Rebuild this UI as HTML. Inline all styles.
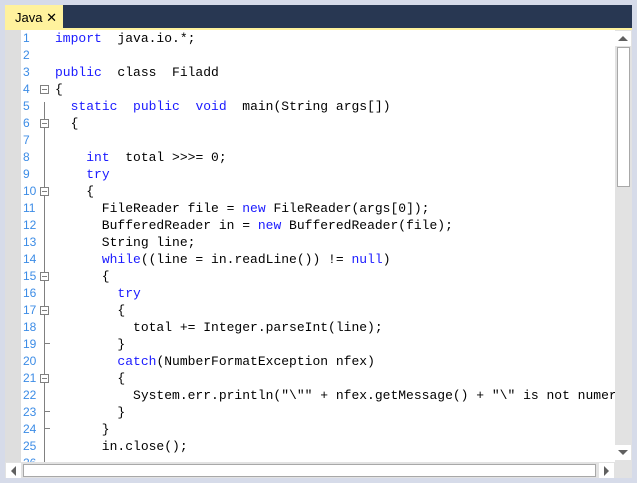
<!DOCTYPE html>
<html><head><style>
*{margin:0;padding:0;box-sizing:border-box}
body{width:637px;height:483px;background:#d6dbe9;position:relative;overflow:hidden;font-family:"Liberation Sans",sans-serif}
#tabbar{position:absolute;left:5px;top:5px;width:627px;height:23px;background:#283752}
#tab{position:absolute;left:5px;top:5px;width:58px;height:23px;background:#fff29d;font-size:13px;color:#000;padding:5px 0 0 10px}
#yl{position:absolute;left:5px;top:28px;width:627px;height:2px;background:#fff29d}
#ed{position:absolute;left:5px;top:30px;width:627px;height:432px;background:#fff;overflow:hidden}
#gut{position:absolute;left:0;top:0;width:16px;height:432px;background:#dedede}
.ln{position:absolute;left:18px;font-size:12px;color:#3c8ce6;height:17px;line-height:17px}
.cd{position:absolute;left:50px;font-family:"Liberation Mono",monospace;font-size:13px;height:17px;line-height:17px;white-space:pre;color:#000}
.k{color:#1a1aff}
.fb{position:absolute;left:35px;width:9px;height:9px;border:1px solid #808080;background:#fff}
.fb:after{content:"";position:absolute;left:1px;top:3px;width:5px;height:1px;background:#808080}
#fl{position:absolute;left:39px;top:72px;width:1px;height:360px;background:#808080}
.tk{position:absolute;left:40px;width:5px;height:1px;background:#808080}
#vs{position:absolute;left:615px;top:30px;width:17px;height:432px;background:#e2e2e2}
#hs{position:absolute;left:5px;top:462px;width:627px;height:16px;background:#e2e2e2}
</style></head><body>
<div id="tabbar"></div>
<div id="tab">Java ✕</div>
<div id="yl"></div>
<div id="ed">
<div id="gut"></div>
<div id="fl"></div>
<div class="ln" style="top:0">1</div><div class="ln" style="top:17px">2</div><div class="ln" style="top:34px">3</div><div class="ln" style="top:51px">4</div><div class="ln" style="top:68px">5</div><div class="ln" style="top:85px">6</div><div class="ln" style="top:102px">7</div><div class="ln" style="top:119px">8</div><div class="ln" style="top:136px">9</div><div class="ln" style="top:153px">10</div><div class="ln" style="top:170px">11</div><div class="ln" style="top:187px">12</div><div class="ln" style="top:204px">13</div><div class="ln" style="top:221px">14</div><div class="ln" style="top:238px">15</div><div class="ln" style="top:255px">16</div><div class="ln" style="top:272px">17</div><div class="ln" style="top:289px">18</div><div class="ln" style="top:306px">19</div><div class="ln" style="top:323px">20</div><div class="ln" style="top:340px">21</div><div class="ln" style="top:357px">22</div><div class="ln" style="top:374px">23</div><div class="ln" style="top:391px">24</div><div class="ln" style="top:408px">25</div><div class="ln" style="top:425px">26</div>
<div class="fb" style="top:55px"></div><div class="fb" style="top:89px"></div><div class="fb" style="top:157px"></div><div class="fb" style="top:242px"></div><div class="fb" style="top:276px"></div><div class="fb" style="top:344px"></div>
<div class="tk" style="top:313px"></div><div class="tk" style="top:381px"></div><div class="tk" style="top:398px"></div>
<div class="cd" style="top:0"><span class="k">import</span>  java.io.*;</div>
<div class="cd" style="top:34px"><span class="k">public</span>  class  Filadd</div>
<div class="cd" style="top:51px">{</div>
<div class="cd" style="top:68px">  <span class="k">static</span>  <span class="k">public</span>  <span class="k">void</span>  main(String args[])</div>
<div class="cd" style="top:85px">  {</div>
<div class="cd" style="top:119px">    <span class="k">int</span>  total &gt;&gt;&gt;= 0;</div>
<div class="cd" style="top:136px">    <span class="k">try</span></div>
<div class="cd" style="top:153px">    {</div>
<div class="cd" style="top:170px">      FileReader file = <span class="k">new</span> FileReader(args[0]);</div>
<div class="cd" style="top:187px">      BufferedReader in = <span class="k">new</span> BufferedReader(file);</div>
<div class="cd" style="top:204px">      String line;</div>
<div class="cd" style="top:221px">      <span class="k">while</span>((line = in.readLine()) != <span class="k">null</span>)</div>
<div class="cd" style="top:238px">      {</div>
<div class="cd" style="top:255px">        <span class="k">try</span></div>
<div class="cd" style="top:272px">        {</div>
<div class="cd" style="top:289px">          total += Integer.parseInt(line);</div>
<div class="cd" style="top:306px">        }</div>
<div class="cd" style="top:323px">        <span class="k">catch</span>(NumberFormatException nfex)</div>
<div class="cd" style="top:340px">        {</div>
<div class="cd" style="top:357px">          System.err.println("\"" + nfex.getMessage() + "\" is not numeric");</div>
<div class="cd" style="top:374px">        }</div>
<div class="cd" style="top:391px">      }</div>
<div class="cd" style="top:408px">      in.close();</div>
</div>
<div id="vs">
<div style="position:absolute;left:0;top:1px;width:16px;height:15px;background:#fff"><div style="position:absolute;left:3px;top:5px;border-left:5px solid transparent;border-right:5px solid transparent;border-bottom:5px solid #606060"></div></div>
<div style="position:absolute;left:2px;top:17px;width:13px;height:140px;background:#fff;border:1px solid #a8a8a8"></div>
<div style="position:absolute;left:0;top:415px;width:16px;height:15px;background:#fff"><div style="position:absolute;left:3px;top:5px;border-left:5px solid transparent;border-right:5px solid transparent;border-top:5px solid #606060"></div></div>
</div>
<div id="hs">
<div style="position:absolute;left:1px;top:1px;width:15px;height:15px;background:#fff"><div style="position:absolute;left:5px;top:3px;border-top:5px solid transparent;border-bottom:5px solid transparent;border-right:5px solid #606060"></div></div>
<div style="position:absolute;left:18px;top:2px;width:573px;height:13px;background:#fff;border:1px solid #a8a8a8"></div>
<div style="position:absolute;left:594px;top:1px;width:15px;height:15px;background:#fff"><div style="position:absolute;left:5px;top:3px;border-top:5px solid transparent;border-bottom:5px solid transparent;border-left:5px solid #606060"></div></div>
</div>
</body></html>
